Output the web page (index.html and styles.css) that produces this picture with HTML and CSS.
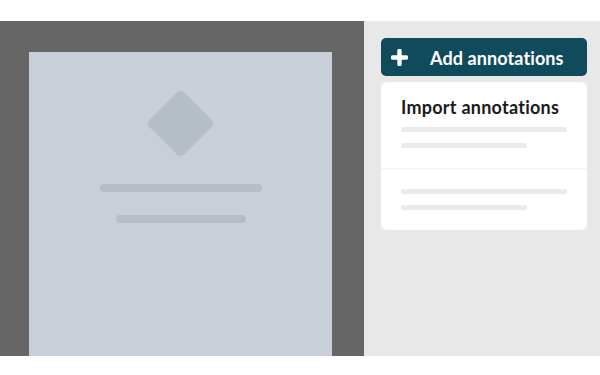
FILE: index.html
```html
<!DOCTYPE html>
<html lang="en">
<head>
<meta charset="utf-8">
<title>Annotations</title>
<link rel="stylesheet" href="styles.css">
</head>
<body>
<div class="frame">
  <div class="viewer">
    <div class="page">
      <div class="diamond"></div>
      <div class="pbar pbar-long"></div>
      <div class="pbar pbar-short"></div>
    </div>
  </div>
  <div class="panel">
    <button class="add-btn">
      <svg class="plus" width="17" height="17" viewBox="0 0 17 17"><path d="M8.5 1.8v13.4M1.8 8.5h13.4" stroke="#fff" stroke-width="4.4" stroke-linecap="round"/></svg>
      <span class="add-label">Add annotations</span>
    </button>
    <div class="card">
      <div class="section section-first">
        <div class="card-title">Import annotations</div>
        <div class="line line-long"></div>
        <div class="line line-short"></div>
      </div>
      <div class="section section-second">
        <div class="line line-long"></div>
        <div class="line line-short"></div>
      </div>
    </div>
  </div>
</div>
</body>
</html>
```

FILE: styles.css
```css
html, body {
  margin: 0;
  padding: 0;
  background: #ffffff;
  font-family: Lato, "Open Sans", sans-serif;
}

.frame {
  margin-top: 21px;
  height: 335px;
  display: flex;
  overflow: hidden;
}

.viewer {
  width: 364px;
  flex: none;
  background: #666667;
  padding: 31px 32px 0 29px;
  box-sizing: border-box;
  display: flex;
}

.page {
  flex: 1;
  background: #c8cfd8;
  display: flex;
  flex-direction: column;
  align-items: center;
  padding-top: 47px;
}

.diamond {
  width: 49px;
  height: 49px;
  background: #b5bdc7;
  border-radius: 5px;
  transform: rotate(45deg);
  margin-bottom: 36px;
}

.pbar {
  height: 8px;
  border-radius: 4px;
  background: #b5bdc7;
}

.pbar-long {
  width: 162px;
}

.pbar-short {
  width: 130px;
  margin-top: 23px;
}

.panel {
  flex: 1;
  background: #e8e8e8;
  padding: 17px 13px 0 17px;
  display: flex;
  flex-direction: column;
}

.add-btn {
  height: 38px;
  border: none;
  border-radius: 5px;
  background: #0f4b5b;
  color: #ffffff;
  display: flex;
  align-items: center;
  padding: 0 0 0 10px;
  font-family: Lato, "Open Sans", sans-serif;
  font-weight: 700;
  font-size: 18px;
  cursor: pointer;
}

.plus {
  flex: none;
  display: block;
}

.add-label {
  margin-left: 22px;
  margin-top: 1px;
  letter-spacing: 0.1px;
}

.card {
  margin-top: 6px;
  background: #ffffff;
  border-radius: 6px;
  display: flex;
  flex-direction: column;
}

.section {
  padding-left: 20px;
}

.section-first {
  height: 87px;
  box-sizing: border-box;
  padding-top: 14px;
  border-bottom: 1px solid #f3f3f3;
}

.section-second {
  height: 61px;
  box-sizing: border-box;
  padding-top: 20px;
}

.card-title {
  font-size: 18px;
  font-weight: 700;
  color: #1b1b1b;
  line-height: 22px;
  margin-bottom: 9px;
  letter-spacing: 0.25px;
}

.line {
  height: 5px;
  border-radius: 3px;
  background: #ebebeb;
}

.line-long {
  width: 166px;
}

.line-short {
  width: 126px;
  margin-top: 11px;
}
```
